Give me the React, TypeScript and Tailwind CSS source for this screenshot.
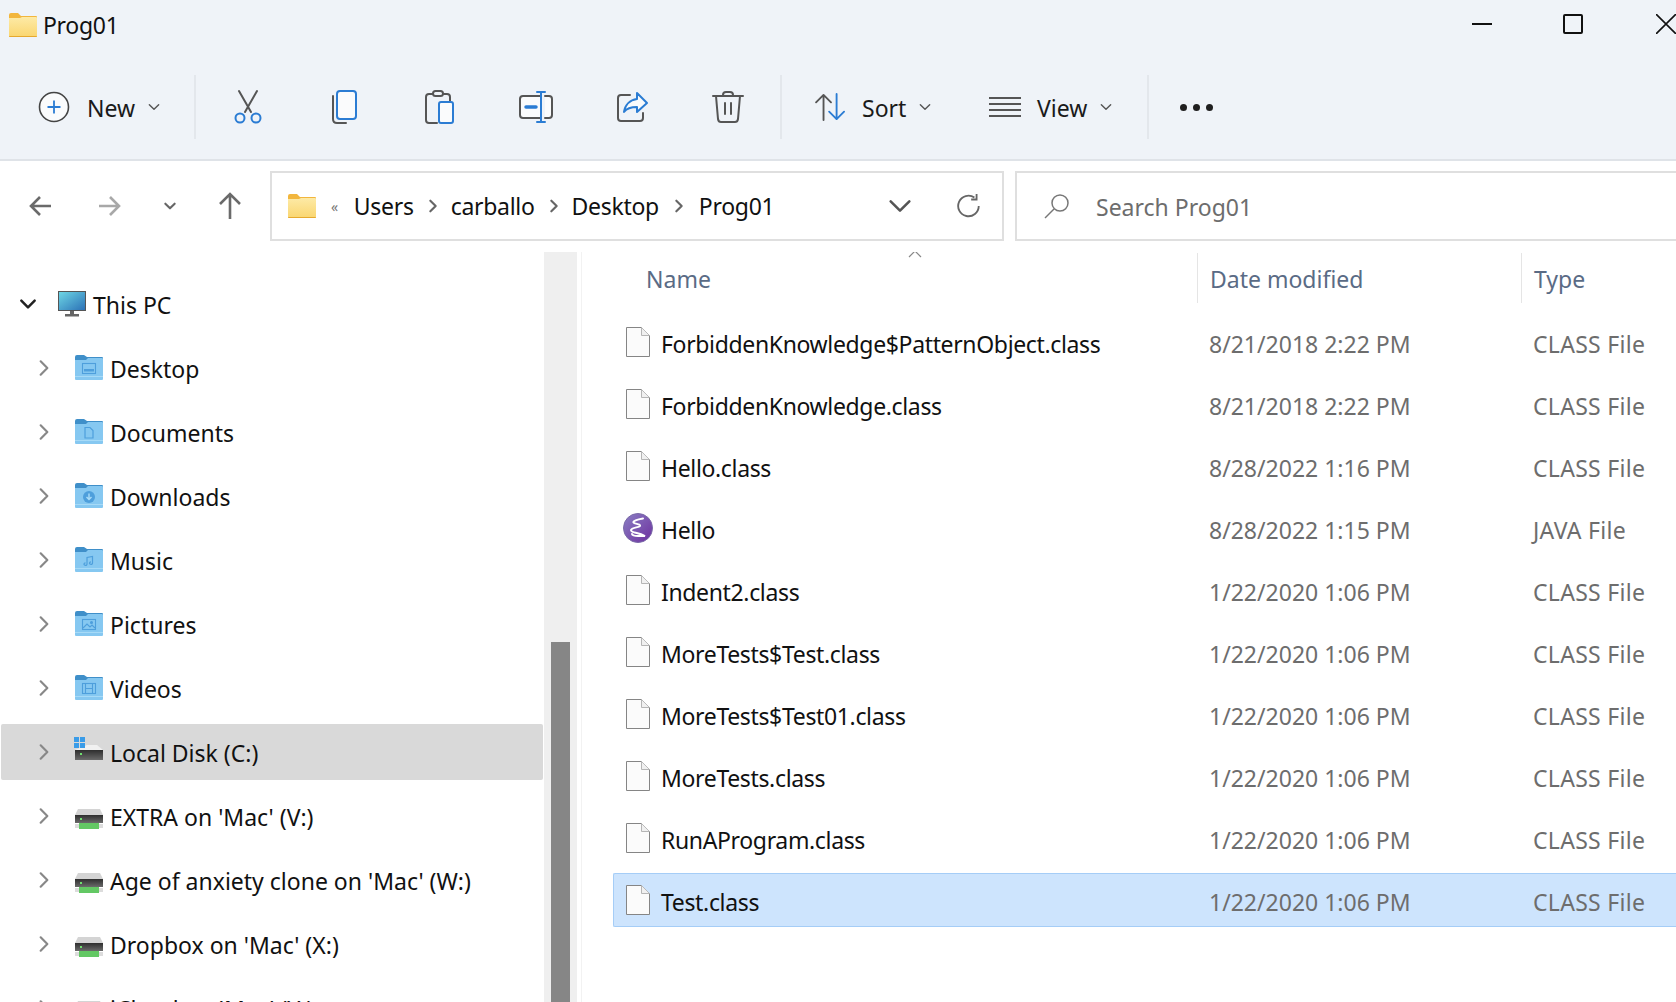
import React from 'react';

const font = 'font-["Noto_Sans","Open_Sans",sans-serif]';

function Chevron({ down, className, width = 1.6 }: { down?: boolean; className?: string; width?: number }) {
  return (
    <svg viewBox="0 0 12 12" className={className} fill="none" stroke="currentColor" strokeWidth={width} strokeLinecap="round" strokeLinejoin="round">
      {down ? <path d="M2 4 L6 8 L10 4" /> : <path d="M4 2 L8 6 L4 10" />}
    </svg>
  );
}

function YellowFolder({ className }: { className?: string }) {
  return (
    <svg viewBox="0 0 28 24" className={className}>
      <defs>
        <linearGradient id="yf" x1="0" y1="0" x2="0" y2="1">
          <stop offset="0" stopColor="#fdeaa6" />
          <stop offset="1" stopColor="#fad670" />
        </linearGradient>
      </defs>
      <path d="M0 2 Q0 0 2 0 H9 L12 3 H27 Q28 3 28 4 V6 H0 Z" fill="#f2b63d" />
      <path d="M0 5 H11 L13 4 H27 Q28 4 28 5 V23 Q28 24 27 24 H1 Q0 24 0 23 Z" fill="url(#yf)" />
      <path d="M0 23 H28 V23.2 Q28 24 27 24 H1 Q0 24 0 23.2 Z" fill="#e6a92e" />
    </svg>
  );
}

function BlueFolder({ glyph }: { glyph: string }) {
  return (
    <svg viewBox="0 0 28 26" className="w-[28px] h-[26px] shrink-0">
      <path d="M0 2 Q0 0 2 0 H9 L12 2 H27 Q28 2 28 3 V8 H0 Z" fill="#3f8fc9" />
      <path d="M0 5 H11 L13 3 H27 Q28 3 28 4 V24 Q28 25 27 25 H1 Q0 25 0 24 Z" fill="#86c8f1" />
      <rect x="0" y="21" width="28" height="1" fill="#a6daf7" />
      {glyph === 'desktop' && (
        <g fill="none" stroke="#4e9fdc" strokeWidth="1.1">
          <rect x="7.5" y="8.5" width="13" height="10" />
          <rect x="9" y="14" width="10" height="2.5" fill="#4e9fdc" stroke="none" />
        </g>
      )}
      {glyph === 'documents' && (
        <path d="M10 8.5 H15 L18 11.5 V19 H10 Z" fill="none" stroke="#4e9fdc" strokeWidth="1.2" />
      )}
      {glyph === 'downloads' && (
        <g>
          <circle cx="14" cy="14" r="6" fill="#4e9fdc" />
          <path d="M14 10.5 V16 M11.5 14 L14 16.5 L16.5 14" stroke="#a9dcf8" strokeWidth="1.4" fill="none" />
        </g>
      )}
      {glyph === 'music' && (
        <path d="M12 17 V10.5 L17.5 9.5 V16 M12 17 a1.5 1.3 0 1 1 -1.5 -1.2 M17.5 16 a1.5 1.3 0 1 1 -1.5 -1.2" fill="none" stroke="#4e9fdc" strokeWidth="1.2" />
      )}
      {glyph === 'pictures' && (
        <g fill="none" stroke="#4e9fdc" strokeWidth="1.1">
          <rect x="7.5" y="8.5" width="13" height="10" />
          <path d="M8 17 L12 13 L15 16 L17 14 L20 17" />
          <circle cx="16.5" cy="11.5" r="1" fill="#4e9fdc" />
        </g>
      )}
      {glyph === 'videos' && (
        <g fill="none" stroke="#4e9fdc" strokeWidth="1.1">
          <rect x="7.5" y="8.5" width="13" height="10" />
          <path d="M10.5 8.5 V18.5 M17.5 8.5 V18.5 M10.5 13.5 H17.5" />
        </g>
      )}
    </svg>
  );
}

function Drive({ kind }: { kind: 'local' | 'net' }) {
  const top = kind === 'local' ? 11 : 12;
  const h = kind === 'local' ? 10 : 8;
  return (
    <svg viewBox="0 0 28 26" className="w-[28px] h-[26px] shrink-0 overflow-visible">
      <defs>
        <linearGradient id={`dr-${kind}`} x1="0" y1="0" x2="0" y2="1">
          <stop offset="0" stopColor="#2e2e2e" />
          <stop offset="1" stopColor="#6a6a6a" />
        </linearGradient>
      </defs>
      {kind === 'local' ? (
        <path d="M12 6 H22 L28 11 H0 Z" fill="#f1f1f1" />
      ) : (
        <path d="M3 6 H25 L28 12 H0 Z" fill="#d4d4d4" />
      )}
      <rect x="0" y={top} width="28" height={h} fill={`url(#dr-${kind})`} />
      <rect x="5" y={top + 3} width="2" height="2" fill="#6fe06f" />
      {kind === 'net' && (
        <g>
          <rect x="0" y="21" width="28" height="4" fill="#dcdcdc" />
          <rect x="4" y="20" width="20" height="6" fill="#63c864" />
        </g>
      )}
      {kind === 'local' && (
        <g fill="#3a9ce8">
          <rect x="-1" y="-2" width="5" height="5" />
          <rect x="5" y="-2" width="5" height="5" />
          <rect x="-1" y="4" width="5" height="5" />
          <rect x="5" y="4" width="5" height="5" />
        </g>
      )}
    </svg>
  );
}

function FileIcon() {
  return (
    <svg viewBox="0 0 24 30" className="w-[24px] h-[30px] shrink-0">
      <path d="M0.5 0.5 H15.5 L23.5 8.5 V29.5 H0.5 Z" fill="#fbfbfb" stroke="#858585" />
      <path d="M15.5 0.5 V8.5 H23.5" fill="#f0f0f0" stroke="#b5b5b5" />
    </svg>
  );
}

function EmacsIcon() {
  return (
    <svg viewBox="0 0 30 30" className="w-[30px] h-[30px] shrink-0">
      <defs>
        <linearGradient id="em" x1="0" y1="0" x2="1" y2="1">
          <stop offset="0" stopColor="#8a7fc4" />
          <stop offset="1" stopColor="#6d2f9e" />
        </linearGradient>
      </defs>
      <circle cx="15" cy="15" r="14.5" fill="url(#em)" stroke="#7a6aa8" strokeWidth="1" />
      <path d="M20 5.5 C14 6.5 9.5 8 10.5 9.5 C11.5 11 18 11 17 13 C16 14.5 8.5 14.5 8 17 C7.5 20 15 19 22 23 C17 22.5 10 24.5 9 21" fill="none" stroke="#fff" strokeWidth="2" strokeLinecap="round" />
    </svg>
  );
}

function ToolIcon({ children }: { children: React.ReactNode }) {
  return (
    <svg viewBox="0 0 36 36" className="w-[36px] h-[36px] shrink-0" fill="none" strokeWidth="2" strokeLinecap="round" strokeLinejoin="round">
      {children}
    </svg>
  );
}

const gray = '#555555';
const blue = '#2b7cd3';

function Separator() {
  return <div className="w-[2px] h-[64px] bg-[#e3e7ec] shrink-0" />;
}

function ToolButton({ children }: { children: React.ReactNode }) {
  return <div className="w-[96px] flex items-center justify-center shrink-0">{children}</div>;
}

function Toolbar() {
  return (
    <div className="flex items-center h-[64px] text-[23px] text-[#1a1a1a]">
      <div className="w-[194px] pl-[38px] flex items-center shrink-0">
        <svg viewBox="0 0 32 32" className="w-[32px] h-[32px] shrink-0" fill="none">
          <circle cx="16" cy="16" r="14.5" stroke="#444" strokeWidth="1.6" fill="#fafbfc" />
          <path d="M16 9.5 V22.5 M9.5 16 H22.5" stroke={blue} strokeWidth="1.8" />
        </svg>
        <span className="ml-[17px] mt-[3px] leading-none">New</span>
        <Chevron down width={1.2} className="w-[14px] h-[14px] ml-[12px] text-[#555]" />
      </div>
      <Separator />
      <div className="flex pl-[4px]">
        <ToolButton>
          <ToolIcon>
            <path d="M9 2 L21 23 M27 2 L15 23" stroke={gray} />
            <circle cx="10" cy="29" r="4.5" stroke={blue} />
            <circle cx="26" cy="29" r="4.5" stroke={blue} />
          </ToolIcon>
        </ToolButton>
        <ToolButton>
          <ToolIcon>
            <path d="M7 7 V30 Q7 34 11 34 H20" stroke={gray} />
            <rect x="11" y="2" width="19" height="28" rx="3" stroke={blue} fill="#fafbfc" />
          </ToolIcon>
        </ToolButton>
        <ToolButton>
          <ToolIcon>
            <path d="M11 5 H7 Q4 5 4 8 V31 Q4 34 7 34 H15 M28 12 V8 Q28 5 25 5 H21" stroke={gray} />
            <rect x="11" y="2" width="10" height="5" rx="2.5" stroke={gray} fill="#eff3f8" />
            <rect x="17" y="13" width="14" height="21" rx="2" stroke={blue} fill="#fafbfc" />
          </ToolIcon>
        </ToolButton>
        <ToolButton>
          <ToolIcon>
            <path d="M22 7 H5 Q2 7 2 10 V26 Q2 29 5 29 H22 M27 7 H31 Q34 7 34 10 V26 Q34 29 31 29 H27" stroke={gray} fill="#fafbfc" />
            <path d="M19 3 H27 M23 3 V33 M19 33 H27" stroke={blue} />
            <path d="M8 18 H18" stroke={blue} strokeWidth="3.5" />
          </ToolIcon>
        </ToolButton>
        <ToolButton>
          <ToolIcon>
            <path d="M16 6 H7 Q4 6 4 9 V29 Q4 32 7 32 H26 Q29 32 29 29 V24" stroke={gray} />
            <path d="M23 4 L33 14 L23 23 V18 C17 18 13 19 10 23 C11 16 16 11 23 10 Z" stroke={blue} fill="#fafbfc" />
          </ToolIcon>
        </ToolButton>
        <ToolButton>
          <ToolIcon>
            <path d="M3 7 H33 M6 7 L8 30 Q8.5 33 11 33 H25 Q27.5 33 28 30 L30 7 M13 7 V6 Q13 3 16 3 H20 Q23 3 23 6 V7" stroke={gray} />
            <path d="M15 14 V25 M21 14 V25" stroke={gray} />
          </ToolIcon>
        </ToolButton>
      </div>
      <div className="ml-[4px]">
        <Separator />
      </div>
      <div className="flex items-center w-[207px] pl-[33px] shrink-0">
        <svg viewBox="0 0 34 30" className="w-[32px] h-[28px] shrink-0" fill="none" strokeWidth="2" strokeLinecap="round" strokeLinejoin="round">
          <path d="M9 29 V2 M1 10 L9 2 L17 10" stroke={gray} />
          <path d="M23 1 V28 M15 20 L23 28 L31 20" stroke={blue} />
        </svg>
        <span className="ml-[15px] mt-[3px] leading-none">Sort</span>
        <Chevron down width={1.2} className="w-[14px] h-[14px] ml-[12px] text-[#555]" />
      </div>
      <div className="flex items-center w-[158px] shrink-0">
        <svg viewBox="0 0 32 22" className="w-[32px] h-[22px] shrink-0" fill="none" stroke={gray} strokeWidth="2">
          <path d="M0 2 H32 M0 8 H32 M0 14 H32 M0 20 H32" />
        </svg>
        <span className="ml-[16px] mt-[3px] leading-none">View</span>
        <Chevron down width={1.2} className="w-[14px] h-[14px] ml-[12px] text-[#555]" />
      </div>
      <Separator />
      <div className="flex gap-[6px] ml-[31px]">
        <div className="w-[7px] h-[7px] rounded-full bg-[#1f1f1f]" />
        <div className="w-[7px] h-[7px] rounded-full bg-[#1f1f1f]" />
        <div className="w-[7px] h-[7px] rounded-full bg-[#1f1f1f]" />
      </div>
    </div>
  );
}

function NavBar() {
  return (
    <div className="flex items-center h-[70px] mt-[10px]">
      <div className="w-[270px] shrink-0 flex items-center pl-[29px]">
        <svg viewBox="0 0 24 24" className="w-[24px] h-[24px]" fill="none" stroke="#6a6a6a" strokeWidth="2.6">
          <path d="M22 12 H2 M11 3 L2 12 L11 21" />
        </svg>
        <svg viewBox="0 0 24 24" className="w-[24px] h-[24px] ml-[44px]" fill="none" stroke="#a8a8a8" strokeWidth="2.6">
          <path d="M2 12 H22 M13 3 L22 12 L13 21" />
        </svg>
        <Chevron down width={1.8} className="w-[14px] h-[14px] ml-[42px] text-[#666]" />
        <svg viewBox="0 0 24 28" className="w-[24px] h-[28px] ml-[41px]" fill="none" stroke="#6a6a6a" strokeWidth="2.6">
          <path d="M12 27 V2 M2 12 L12 2 L22 12" />
        </svg>
      </div>
      <div className="w-[734px] h-[70px] shrink-0 border-2 border-[#dfdfdf] flex items-center pl-[16px] pr-[20px] text-[23px] tracking-[-0.3px] text-[#111]">
        <YellowFolder className="w-[28px] h-[24px] shrink-0" />
        <span className="ml-[15px] mr-[16px] text-[14px] text-[#777]">«</span>
        <span>Users</span>
        <Chevron width={1.6} className="w-[16px] h-[16px] ml-[11px] mr-[10px] text-[#666] shrink-0" />
        <span>carballo</span>
        <Chevron width={1.6} className="w-[16px] h-[16px] ml-[11px] mr-[10px] text-[#666] shrink-0" />
        <span>Desktop</span>
        <Chevron width={1.6} className="w-[16px] h-[16px] mx-[12px] text-[#666] shrink-0" />
        <span>Prog01</span>
        <Chevron down width={1.1} className="w-[28px] h-[28px] ml-auto text-[#555]" />
        <svg viewBox="0 0 24 24" className="w-[26px] h-[26px] ml-[42px]" fill="none" stroke="#666" strokeWidth="1.7">
          <path d="M21 12 A9.5 9.5 0 1 1 17 4.2 M19 1 V6 H14" />
        </svg>
      </div>
      <div className="ml-[11px] flex-1 h-[70px] border-y-2 border-l-2 border-[#dfdfdf] flex items-center pl-[27px] text-[23px] text-[#6d6d6d]">
        <svg viewBox="0 0 26 26" className="w-[26px] h-[26px] shrink-0" fill="none" stroke="#777" strokeWidth="1.5">
          <circle cx="16" cy="10" r="8" />
          <path d="M10 16 L1 25" />
        </svg>
        <span className="ml-[26px] mt-[2px]">Search Prog01</span>
      </div>
    </div>
  );
}

const tree: { label: string; icon: React.ReactNode }[] = [
  { label: 'Desktop', icon: <BlueFolder glyph="desktop" /> },
  { label: 'Documents', icon: <BlueFolder glyph="documents" /> },
  { label: 'Downloads', icon: <BlueFolder glyph="downloads" /> },
  { label: 'Music', icon: <BlueFolder glyph="music" /> },
  { label: 'Pictures', icon: <BlueFolder glyph="pictures" /> },
  { label: 'Videos', icon: <BlueFolder glyph="videos" /> },
  { label: 'Local Disk (C:)', icon: <Drive kind="local" /> },
  { label: "EXTRA on 'Mac' (V:)", icon: <Drive kind="net" /> },
  { label: "Age of anxiety clone on 'Mac' (W:)", icon: <Drive kind="net" /> },
  { label: "Dropbox on 'Mac' (X:)", icon: <Drive kind="net" /> },
  { label: "iCloud on 'Mac' (Y:)", icon: <Drive kind="net" /> },
];

function Sidebar() {
  return (
    <div className="w-[544px] shrink-0 pt-[35px] pl-[1px] pr-[1px] text-[23px] text-[#111] flex flex-col gap-[8px]">
      <div className="h-[56px] flex items-center shrink-0">
        <Chevron down width={1.5} className="w-[20px] h-[20px] ml-[17px] text-[#222] shrink-0" />
        <svg viewBox="0 0 28 26" className="w-[28px] h-[26px] ml-[20px] shrink-0">
          <defs>
            <linearGradient id="pc" x1="0" y1="0" x2="1" y2="1">
              <stop offset="0" stopColor="#6fd8e6" />
              <stop offset="1" stopColor="#2a6fb5" />
            </linearGradient>
          </defs>
          <rect x="0.5" y="0.5" width="27" height="19" fill="url(#pc)" stroke="#555" />
          <rect x="12" y="20" width="4" height="3" fill="#666" />
          <rect x="7" y="23" width="14" height="2.5" fill="#666" />
        </svg>
        <span className="ml-[7px] mt-[2px]">This PC</span>
      </div>
      {tree.map((item) => (
        <div
          key={item.label}
          className={`h-[56px] shrink-0 flex items-center rounded-[2px] whitespace-nowrap ${item.label === 'Local Disk (C:)' ? 'bg-[#d9d9d9]' : ''}`}
        >
          <Chevron width={1.3} className="w-[20px] h-[20px] ml-[33px] text-[#888] shrink-0" />
          <div className="ml-[21px]">{item.icon}</div>
          <span className="ml-[7px] mt-[2px]">{item.label}</span>
        </div>
      ))}
    </div>
  );
}

const files = [
  { name: 'ForbiddenKnowledge$PatternObject.class', date: '8/21/2018 2:22 PM', type: 'CLASS File' },
  { name: 'ForbiddenKnowledge.class', date: '8/21/2018 2:22 PM', type: 'CLASS File' },
  { name: 'Hello.class', date: '8/28/2022 1:16 PM', type: 'CLASS File' },
  { name: 'Hello', date: '8/28/2022 1:15 PM', type: 'JAVA File', emacs: true },
  { name: 'Indent2.class', date: '1/22/2020 1:06 PM', type: 'CLASS File' },
  { name: 'MoreTests$Test.class', date: '1/22/2020 1:06 PM', type: 'CLASS File' },
  { name: 'MoreTests$Test01.class', date: '1/22/2020 1:06 PM', type: 'CLASS File' },
  { name: 'MoreTests.class', date: '1/22/2020 1:06 PM', type: 'CLASS File' },
  { name: 'RunAProgram.class', date: '1/22/2020 1:06 PM', type: 'CLASS File' },
  { name: 'Test.class', date: '1/22/2020 1:06 PM', type: 'CLASS File', selected: true },
];

function FileList() {
  return (
    <div className="flex-1 min-w-0 border-l border-[#f2f2f2] ml-[4px] mt-[11px] text-[23px] overflow-hidden">
      <div className="relative flex h-[50px] mt-[1px] text-[#5a6b85]">
        <svg viewBox="0 0 14 8" className="absolute left-[326px] top-[-3px] w-[14px] h-[8px]" fill="none" stroke="#888" strokeWidth="1.2">
          <path d="M1 7 L7 1 L13 7" />
        </svg>
        <div className="w-[615px] pl-[64px] pt-[2px] flex items-center">Name</div>
        <div className="w-[324px] pl-[12px] pt-[2px] border-l border-[#e5e5e5] flex items-center">Date modified</div>
        <div className="flex-1 pl-[12px] pt-[2px] border-l border-[#e5e5e5] flex items-center">Type</div>
      </div>
      <div className="mt-[12px] pl-[31px] flex flex-col gap-[8px]">
        {files.map((f) => (
          <div
            key={f.name}
            className={`h-[54px] flex items-center border whitespace-nowrap ${f.selected ? 'bg-[#cde4fd] border-[#a5cdf7] rounded-l-[2px] border-r-0' : 'border-transparent'}`}
          >
            <div className="w-[47px] flex justify-center shrink-0">
              {f.emacs ? <EmacsIcon /> : <FileIcon />}
            </div>
            <span className="w-[548px] mt-[4px] text-[#111] tracking-[-0.35px] shrink-0">{f.name}</span>
            <span className="w-[324px] mt-[4px] text-[#6d6d6d] shrink-0">{f.date}</span>
            <span className="mt-[4px] text-[#6d6d6d] tracking-[0.3px]">{f.type}</span>
          </div>
        ))}
      </div>
    </div>
  );
}

export default function App() {
  return (
    <div className={`w-[1676px] h-[1002px] overflow-hidden bg-white flex flex-col ${font}`}>
      <div className="h-[161px] shrink-0 bg-[#eff3f8] border-b-2 border-[#dfe3e8] flex flex-col">
        <div className="h-[50px] flex items-center pl-[9px] shrink-0">
          <YellowFolder className="w-[28px] h-[24px]" />
          <span className="ml-[6px] text-[23px] tracking-[-0.3px] text-[#111]">Prog01</span>
          <div className="ml-auto flex items-center mb-[2px]">
            <div className="w-[20px] h-[2px] bg-[#111] mr-[71px]" />
            <div className="w-[20px] h-[20px] border-2 border-[#111] rounded-[2px] mr-[73px]" />
            <svg viewBox="0 0 20 20" className="w-[20px] h-[20px]" fill="none" stroke="#111" strokeWidth="1.6">
              <path d="M0 0 L20 20 M20 0 L0 20" />
            </svg>
          </div>
        </div>
        <div className="mt-[25px]">
          <Toolbar />
        </div>
      </div>
      <NavBar />
      <div className="flex flex-1 min-h-0 overflow-hidden">
        <Sidebar />
        <div className="w-[33px] shrink-0 bg-[#efefef] mt-[11px] flex justify-center">
          <div className="w-[19px] h-full mt-[390px] bg-[#868686]" />
        </div>
        <FileList />
      </div>
    </div>
  );
}
